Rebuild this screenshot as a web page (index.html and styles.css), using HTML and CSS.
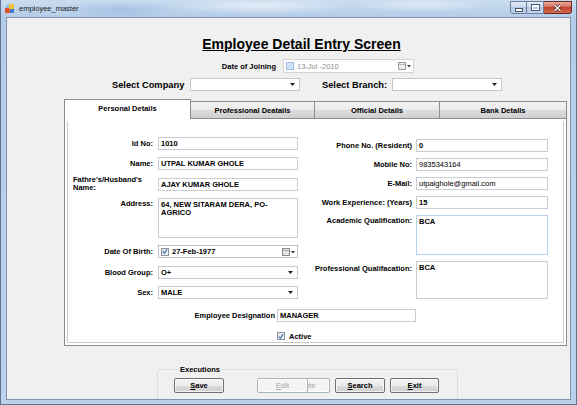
FILE: index.html
```html
<!DOCTYPE html>
<html lang="en">
<head>
    <meta charset="UTF-8">
    <title>employee_master</title>
    <link rel="stylesheet" href="styles.css">
</head>
<body>
    <div class="window">
        <div class="titlebar">
            <svg class="app-icon" width="10" height="10" viewBox="0 0 10 10">
                <rect x="0" y="4" width="5" height="5" fill="#e2502c"/>
                <rect x="4" y="0" width="5" height="5" fill="#f3c12f"/>
                <rect x="5" y="5" width="4" height="4" fill="#3c7ed4"/>
                <rect x="1" y="1" width="3" height="3" fill="#8cb8e8"/>
            </svg>
            <span class="caption">employee_master</span>
            <div class="caption-btns">
                <span class="cbtn cbtn-min"><i></i></span>
                <span class="cbtn cbtn-max"><i></i></span>
                <span class="cbtn cbtn-close">
                    <svg width="9" height="8" viewBox="0 0 9 8">
                        <path d="M1.5 1l6 6M7.5 1l-6 6" stroke="#4a2020" stroke-width="2.6"/>
                        <path d="M1.5 1l6 6M7.5 1l-6 6" stroke="#fff" stroke-width="1.4"/>
                    </svg>
                </span>
            </div>
        </div>

        <div class="client">
            <h1 class="screen-title">Employee Detail Entry Screen</h1>

            <div class="joining-row">
                <span class="joining-label">Date of Joining</span>
                <div class="picker picker-off">
                    <span class="chk chk-off"></span>
                    <span class="picker-text">13-Jul -2010</span>
                    <svg class="cal" width="13" height="8" viewBox="0 0 13 8">
                        <rect x="0.5" y="0.5" width="7" height="7" fill="#ececec" stroke="#9a9a9a"/>
                        <path d="M1 2.5h6" stroke="#b8b8b8"/>
                        <path d="M9 3h4l-2 2.5z" fill="#444"/>
                    </svg>
                </div>
            </div>

            <div class="select-row">
                <span class="select-label company">Select Company</span>
                <div class="combo"><span></span><svg class="arrow" width="5" height="3" viewBox="0 0 5 3"><path d="M0 0h5L2.5 3z" fill="#222"/></svg></div>
                <span class="select-label branch">Select Branch:</span>
                <div class="combo"><span></span><svg class="arrow" width="5" height="3" viewBox="0 0 5 3"><path d="M0 0h5L2.5 3z" fill="#222"/></svg></div>
            </div>

            <div class="tabs">
                <div class="tab-strip">
                    <span class="tab tab-on">Personal Details</span>
                    <span class="tab">Professional Deatails</span>
                    <span class="tab">Official Details</span>
                    <span class="tab">Bank Details</span>
                </div>
                <div class="tab-panel">
                    <div class="tab-page">
                        <div class="cols">
                            <div class="form-grid left">
                                <span class="lbl">Id No:</span>
                                <div class="field">1010</div>

                                <span class="lbl">Name:</span>
                                <div class="field">UTPAL KUMAR GHOLE</div>

                                <span class="lbl lbl-2line">Fathre's/Husband's<br>Name:</span>
                                <div class="field">AJAY KUMAR GHOLE</div>

                                <span class="lbl lbl-top">Address:</span>
                                <div class="field area">64, NEW SITARAM DERA, PO-<br>AGRICO</div>

                                <span class="lbl">Date Of Birth:</span>
                                <div class="picker">
                                    <span class="chk"><svg width="7" height="7" viewBox="0 0 7 7"><path d="M1 3.6l1.7 1.9L6 1" stroke="#2c5fa8" stroke-width="1.2" fill="none"/></svg></span>
                                    <span class="picker-text">27-Feb-1977</span>
                                    <svg class="cal" width="13" height="8" viewBox="0 0 13 8">
                                        <rect x="0.5" y="0.5" width="7" height="7" fill="#e4e4e4" stroke="#8a8a8a"/>
                                        <path d="M1 2.5h6" stroke="#aaa"/>
                                        <path d="M9 3h4l-2 2.5z" fill="#333"/>
                                    </svg>
                                </div>

                                <span class="lbl">Blood Group:</span>
                                <div class="combo"><span>O+</span><svg class="arrow" width="5" height="3" viewBox="0 0 5 3"><path d="M0 0h5L2.5 3z" fill="#222"/></svg></div>

                                <span class="lbl">Sex:</span>
                                <div class="combo"><span>MALE</span><svg class="arrow" width="5" height="3" viewBox="0 0 5 3"><path d="M0 0h5L2.5 3z" fill="#222"/></svg></div>
                            </div>

                            <div class="form-grid right">
                                <span class="lbl">Phone No. (Resident)</span>
                                <div class="field">0</div>

                                <span class="lbl">Mobile No:</span>
                                <div class="field thin">9835343164</div>

                                <span class="lbl">E-Mail:</span>
                                <div class="field thin">utpalghole@gmail.com</div>

                                <span class="lbl">Work Experience: (Years)</span>
                                <div class="field">15</div>

                                <span class="lbl lbl-top">Academic Qualification:</span>
                                <div class="field area focus">BCA</div>

                                <span class="lbl lbl-top lbl-low">Professional Qualifacation:</span>
                                <div class="field area short">BCA</div>
                            </div>
                        </div>

                        <div class="desig-row">
                            <span class="lbl">Employee Designation</span>
                            <div class="field">MANAGER</div>
                        </div>

                        <div class="active-row">
                            <span class="chk"><svg width="7" height="7" viewBox="0 0 7 7"><path d="M1 3.6l1.7 1.9L6 1" stroke="#2c5fa8" stroke-width="1.2" fill="none"/></svg></span>
                            <span>Active</span>
                        </div>
                    </div>
                </div>
            </div>

            <fieldset class="exec-group">
                <legend>Executions</legend>
                <div class="btn-row">
                    <span class="btn btn-save"><u>S</u>ave</span>
                    <span class="btn btn-edit off"><u>E</u>dit</span>
                    <span class="btn btn-delete off">Delete</span>
                    <span class="btn btn-search"><u>S</u>earch</span>
                    <span class="btn btn-exit"><u>E</u>xit</span>
                </div>
            </fieldset>
        </div>
    </div>
</body>
</html>
```

FILE: styles.css
```css
* {
    box-sizing: border-box;
    margin: 0;
    padding: 0;
}

body {
    width: 577px;
    height: 405px;
    overflow: hidden;
    font-family: "Liberation Sans", Arial, sans-serif;
    font-size: 7.5px;
    font-weight: bold;
    color: #000;
    background: #b9cfe8;
}

/* aero style frame */
.window {
    width: 577px;
    height: 405px;
    padding: 0 5px 5px 5px;
    border: 1px solid #5d7391;
    border-top: none;
    background:
        radial-gradient(ellipse 90px 8px at 260px 6px, rgba(255,255,255,0.55), transparent),
        radial-gradient(ellipse 70px 7px at 420px 5px, rgba(255,255,255,0.45), transparent),
        radial-gradient(ellipse 60px 9px at 120px 10px, rgba(120,160,210,0.35), transparent),
        linear-gradient(180deg, #c9dcf0 0px, #b5cde9 17px, #bcd2ec 100%);
}

.titlebar {
    height: 17px;
    display: flex;
    align-items: center;
}

.app-icon {
    margin-left: -1px;
    margin-right: 4px;
}

.caption {
    font-weight: normal;
    font-size: 7.5px;
    color: #1a1a1a;
}

.caption-btns {
    margin-left: auto;
    align-self: flex-start;
    display: flex;
    margin-top: 1px;
    margin-right: -1px;
}

.cbtn {
    height: 13px;
    width: 17px;
    border: 1px solid #6d7f98;
    border-left: none;
    background: linear-gradient(180deg, #e3ecf7 0%, #c9d9ee 45%, #b1c7e3 50%, #c3d6ee 100%);
    display: flex;
    align-items: center;
    justify-content: center;
}

.cbtn-min {
    border-left: 1px solid #6d7f98;
    border-bottom-left-radius: 3px;
}

.cbtn-min i {
    display: block;
    width: 6px;
    height: 2px;
    margin-top: 4px;
    background: #fff;
    box-shadow: 0 0 0 1px #45556b;
}

.cbtn-max i {
    display: block;
    width: 7px;
    height: 5px;
    border: 1px solid #fff;
    border-top-width: 2px;
    box-shadow: 0 0 0 1px #45556b;
}

.cbtn-close {
    width: 28px;
    border-color: #6b2a24;
    border-bottom-right-radius: 3px;
    background: linear-gradient(180deg, #e9a99c 0%, #d5705b 45%, #c2432c 50%, #d26a4d 100%);
}

/* window body */
.client {
    height: 383px;
    border: 1px solid #8294ad;
    background: #f0f0f0;
    overflow: hidden;
}

.screen-title {
    margin-top: 18px;
    padding-left: 26px;
    text-align: center;
    font-size: 14px;
    line-height: 16px;
    text-decoration: underline;
}

.joining-row {
    display: flex;
    align-items: center;
    gap: 7px;
    margin-top: 7px;
    height: 14px;
}

.joining-label {
    width: 269px;
    text-align: right;
}

.picker {
    height: 13px;
    border: 1px solid #bfc3c9;
    background: #fff;
    display: flex;
    align-items: center;
    padding-left: 2px;
    padding-right: 2px;
}

.picker-off {
    width: 131px;
    height: 14px;
    border-color: #d2d4d8;
}

.picker-off .picker-text {
    color: #8d8d8d;
    font-weight: normal;
}

.picker-text {
    margin-left: 3px;
    white-space: nowrap;
}

.cal {
    margin-left: auto;
}

/* small checkboxes */
.chk {
    width: 8px;
    height: 8px;
    border: 1px solid #8e9399;
    background: linear-gradient(135deg, #dfe3e8, #f8f8f8);
    display: flex;
    align-items: center;
    justify-content: center;
}

.chk-off {
    border-color: #9bbbe0;
    background: #cfe1f5;
}

.select-row {
    display: flex;
    align-items: center;
    height: 13px;
    margin-top: 5px;
    padding-left: 105px;
    font-size: 9.3px;
}

.select-label {
    text-align: right;
    white-space: nowrap;
}

.select-label.company {
    width: 72px;
    margin-right: 6px;
}

.select-label.branch {
    width: 63px;
    margin-left: 22px;
    margin-right: 7px;
}

.combo {
    height: 13px;
    border: 1px solid #c4c8ce;
    background: #fff;
    display: flex;
    align-items: center;
    padding: 0 4px 0 2px;
    font-size: 7.5px;
}

.select-row .combo {
    width: 110px;
}

.arrow {
    margin-left: auto;
}

/* tab control */
.tabs {
    margin-top: 8px;
    margin-left: 57px;
    width: 503px;
}

.tab-strip {
    display: flex;
    align-items: flex-end;
    height: 19px;
}

.tab {
    height: 17px;
    border: 1px solid #898c95;
    border-bottom: none;
    background: linear-gradient(180deg, #f3f3f3 0%, #ebebeb 50%, #dddddd 50%, #cfcfcf 100%);
    display: flex;
    align-items: center;
    justify-content: center;
    margin-left: -1px;
}

.tab:nth-child(1) { width: 127px; margin-left: 0; }
.tab:nth-child(2) { width: 125px; }
.tab:nth-child(3) { width: 126px; }
.tab:nth-child(4) { width: 128px; }

.tab-on {
    height: 20px;
    margin-bottom: -1px;
    background: #fff;
    position: relative;
    z-index: 1;
    padding-bottom: 3px;
}

.tab-panel {
    height: 228px;
    border: 1px solid #898c95;
    background: #fff;
    padding: 2px;
}

.tab-page {
    height: 100%;
    border: 1px solid #c9c9c9;
    border-top-color: #fff;
    padding: 15px 0 0 5px;
}

.cols {
    display: flex;
    gap: 3px;
}

.form-grid {
    display: grid;
    align-items: center;
}

.form-grid.left {
    grid-template-columns: 80px 140px;
    column-gap: 5px;
    row-gap: 7px;
}

.form-grid.right {
    grid-template-columns: 111px 132px;
    column-gap: 4px;
    row-gap: 6px;
    margin-top: 2px;
}

.lbl {
    text-align: right;
    white-space: nowrap;
    line-height: 9px;
}

.lbl-2line {
    text-align: left;
    line-height: 8px;
    margin: -2px 0;
}

.lbl-top {
    align-self: start;
    padding-top: 1px;
}

.lbl-low {
    padding-top: 3px;
}

.field {
    height: 13px;
    border: 1px solid #c9ccd2;
    background: #fff;
    padding-left: 2px;
    line-height: 11px;
    white-space: nowrap;
    overflow: hidden;
}

.field.thin {
    font-weight: normal;
}

.field.area {
    height: 40px;
    white-space: normal;
    line-height: 8px;
    padding-top: 2px;
}

.field.short {
    height: 38px;
}

.field.focus {
    border-color: #b7d2ee;
}

.form-grid .picker,
.form-grid .combo {
    width: 140px;
}

.desig-row {
    display: flex;
    align-items: center;
    gap: 2px;
    margin-top: 10px;
    padding-left: 82px;
}

.desig-row .lbl {
    width: 120px;
}

.desig-row .field {
    width: 139px;
}

.active-row {
    display: flex;
    align-items: center;
    gap: 4px;
    margin-top: 8px;
    padding-left: 204px;
    height: 12px;
}

/* buttons group */
.exec-group {
    margin-top: 19px;
    margin-left: 150px;
    width: 301px;
    height: 60px;
    border: 1px solid #d5dfe5;
    border-radius: 3px;
    padding: 4px 0 0 16px;
}

.exec-group legend {
    padding: 0 1px;
    margin-left: 5px;
    line-height: 9px;
}

.btn-row {
    display: flex;
}

.btn {
    height: 15px;
    width: 50px;
    border: 1px solid #707070;
    border-radius: 2px;
    background: linear-gradient(180deg, #f2f2f2 0%, #ebebeb 50%, #dddddd 50%, #cfcfcf 100%);
    box-shadow: inset 0 0 0 1px rgba(255,255,255,0.7);
    display: flex;
    align-items: center;
    justify-content: center;
    position: relative;
}

.btn.off {
    border-color: #adb2b5;
    background: #f4f4f4;
    color: #a2a2a2;
    font-weight: normal;
}

.btn-edit {
    width: 51px;
    margin-left: 33px;
    z-index: 1;
}

.btn-delete {
    width: 51px;
    margin-left: -29px;
}

.btn-search {
    margin-left: 5px;
}

.btn-exit {
    width: 49px;
    margin-left: 5px;
}
```
